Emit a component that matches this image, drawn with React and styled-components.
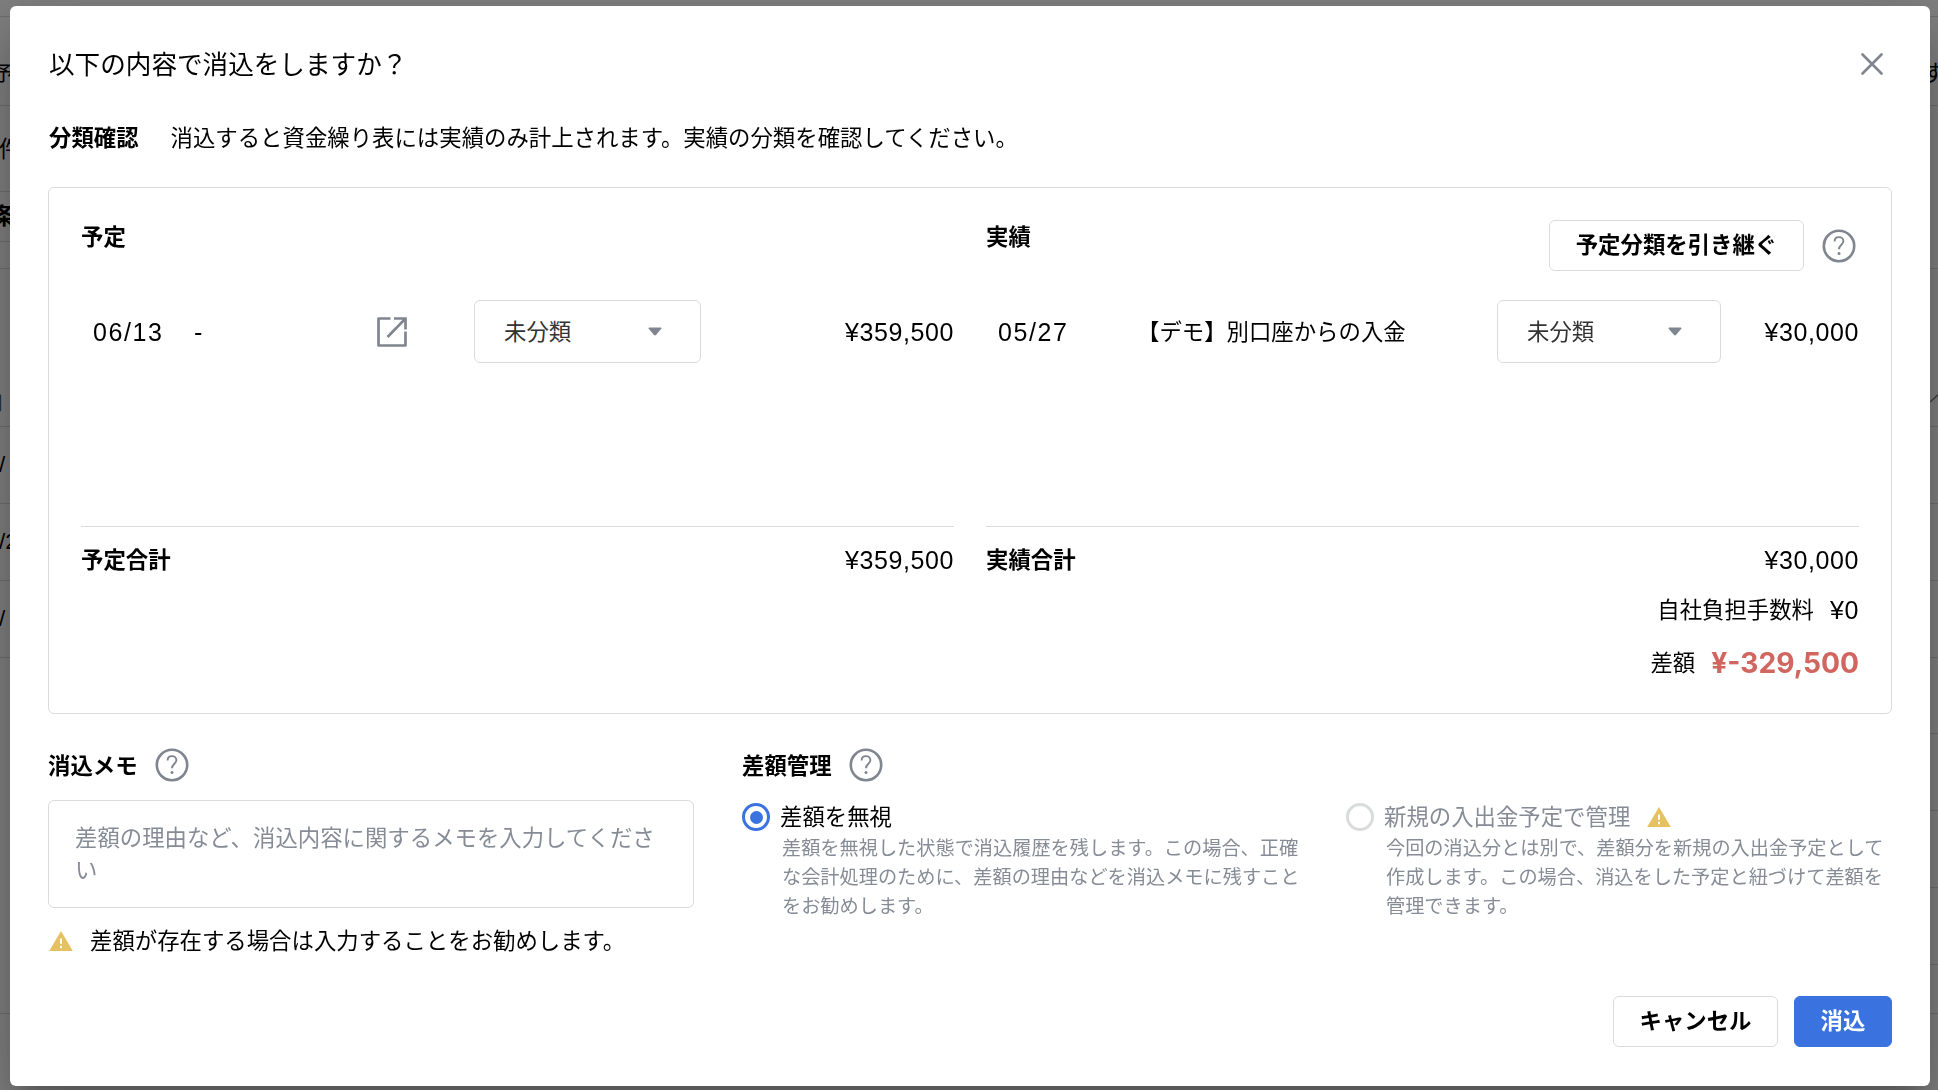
import React, { useState } from "react";
import styled, { createGlobalStyle } from "styled-components";

const GlobalStyle = createGlobalStyle`
  * {
    box-sizing: border-box;
  }
  html,
  body {
    margin: 0;
    height: 100%;
    overflow: hidden;
  }
  body {
    font-family: "Noto Sans CJK JP", sans-serif;
    font-size: 22.4px;
    line-height: 32px;
    color: #000;
    background-color: #fff;
  }
  button,
  textarea {
    font-family: inherit;
    font-size: inherit;
    line-height: inherit;
  }
`;

/* page behind the dialog */

const Page = styled.div`
  display: flex;
  justify-content: space-between;
  width: 1938px;
  height: 1090px;
  overflow: hidden;
`;

const PageColumn = styled.div`
  width: 50%;
  overflow: hidden;
`;

const PageRow = styled.div`
  display: flex;
  align-items: center;
  justify-content: ${props => (props.$right ? "flex-end" : "flex-start")};
  height: ${props => props.$height}px;
  border-bottom: 1px solid ${props => (props.$last ? "transparent" : "#d9dcdc")};
`;

const PageText = styled.span`
  margin-left: ${props => props.$left || 0}px;
  margin-right: ${props => props.$right || 0}px;
  padding-top: ${props => props.$top || 0}px;
  padding-bottom: ${props => props.$bottom || 0}px;
  white-space: nowrap;
  font-family: ${props =>
    props.$latin ? '"Liberation Sans", sans-serif' : "inherit"};
  font-weight: ${props => (props.$bold ? "bold" : "normal")};
  font-size: ${props => props.$size || 22.4}px;
  color: ${props => props.$color || "#000"};
`;

/* dialog */

const Backdrop = styled.div`
  position: fixed;
  inset: 0;
  padding: 6px 8px 4px 10px;
  background-color: rgba(0, 0, 0, 0.5);
`;

const Dialog = styled.section`
  display: flex;
  flex-direction: column;
  width: 1920px;
  height: 1080px;
  padding: 0 38px;
  border-radius: 6px;
  background-color: #fff;
  box-shadow: 0 18px 24px -11px rgba(0, 0, 0, 0.2),
    0 38px 61px 5px rgba(0, 0, 0, 0.14), 0 14px 74px 13px rgba(0, 0, 0, 0.12);
`;

const DialogHeader = styled.header`
  display: flex;
  align-items: center;
  justify-content: space-between;
  height: 116px;
  padding-right: 8px;
`;

const Title = styled.h1`
  margin: 0;
  padding: 0 0 2px 1px;
  font-size: 25.6px;
  font-weight: normal;
`;

const IconButton = styled.button`
  display: flex;
  padding: 0;
  border: none;
  background: none;
  color: #808690;
`;

const Lead = styled.div`
  display: flex;
  align-items: center;
  gap: 32px;
  height: 30px;
  padding-left: 1px;
`;

const Text = styled.span`
  padding-bottom: 3px;
`;

const Bold = styled(Text)`
  font-weight: bold;
`;

const Panel = styled.section`
  display: grid;
  grid-template-columns: 1fr 1fr;
  column-gap: 32px;
  height: 527px;
  margin-top: 35px;
  padding: 32px;
  border: 1px solid #d9dcdc;
  border-radius: 6px;
`;

const Side = styled.div`
  display: flex;
  flex-direction: column;
`;

const SideHeader = styled.div`
  display: flex;
  align-items: flex-start;
  justify-content: space-between;
  height: 80px;
  line-height: 30px;
`;

const Tools = styled.div`
  display: flex;
  align-items: center;
  gap: 18px;
  padding-right: 3px;
`;

const Entries = styled.div`
  height: 227px;
  border-bottom: 1px solid #d9dcdc;
`;

const Entry = styled.div`
  display: grid;
  grid-template-columns: ${props => props.$columns};
  align-items: center;
  height: 63px;
  padding-left: 12px;
`;

const Num = styled.span`
  font-family: "Liberation Sans", sans-serif;
  font-size: 25px;
  letter-spacing: 0.6px;
  text-align: right;
`;

const DateText = styled(Num)`
  letter-spacing: 1.6px;
  text-align: left;
`;

const Select = styled.button`
  display: flex;
  align-items: center;
  justify-content: space-between;
  width: 100%;
  height: 63px;
  padding: 0 38px 0 29px;
  border: 1px solid #d9dcdc;
  border-radius: 6px;
  background-color: #fff;
  color: #333;
`;

const Caret = styled.svg`
  width: 14px;
  height: 9px;
  fill: #808690;
`;

const Button = styled.button`
  width: ${props => props.$width}px;
  height: 51px;
  padding: 0 0 5px;
  border: 1px solid ${props => (props.$primary ? "#3a73e0" : "#d9dcdc")};
  border-radius: 6px;
  font-weight: bold;
  color: ${props => (props.$primary ? "#fff" : "#000")};
  background-color: ${props => (props.$primary ? "#3a73e0" : "#fff")};
`;

const TotalRow = styled.div`
  display: flex;
  align-items: center;
  justify-content: ${props => (props.$end ? "flex-end" : "space-between")};
  gap: 16px;
  height: ${props => props.$height}px;
`;

const Difference = styled.span`
  padding-top: 2px;
  font-family: Inter, sans-serif;
  font-size: 28.2px;
  font-weight: 700;
  color: #d1655f;
`;

const Bottom = styled.div`
  display: grid;
  grid-template-columns: 646px 1fr;
  column-gap: 48px;
  height: 282px;
  padding-top: 34px;
`;

const Label = styled.div`
  display: flex;
  align-items: center;
  gap: 17px;
  height: 34px;
`;

const Memo = styled.textarea`
  display: block;
  width: 646px;
  height: 108px;
  margin-top: 18px;
  padding: 19px 32px 19px 26px;
  border: 1px solid #d9dcdc;
  border-radius: 6px;
  outline: none;
  resize: none;
  overflow: hidden;
  &::placeholder {
    color: #868c96;
    opacity: 1;
  }
`;

const Notice = styled.div`
  display: flex;
  align-items: center;
  gap: 17px;
  margin-top: 15px;
  padding-left: 1px;
`;

const Options = styled.div`
  display: grid;
  grid-template-columns: 604px 1fr;
  margin-top: 18px;
`;

const Option = styled.label`
  display: grid;
  grid-template-columns: 28px 1fr;
  grid-template-rows: 33px;
  column-gap: 10px;
  align-items: center;
  color: ${props => (props.$disabled ? "#868c96" : "#000")};
`;

const Radio = styled.span`
  display: flex;
  align-items: center;
  justify-content: center;
  width: 28px;
  height: 28px;
  margin-top: 1px;
  border: 3px solid ${props => (props.$checked ? "#3a73e0" : "#d9dcdc")};
  border-radius: 50%;
  &::after {
    content: "";
    width: 13px;
    height: 13px;
    border-radius: 50%;
    background-color: ${props => (props.$checked ? "#3a73e0" : "#fff")};
  }
`;

const OptionTitle = styled.span`
  display: flex;
  align-items: center;
  gap: 17px;
`;

const OptionText = styled.p`
  grid-column: 2;
  width: ${props => props.$width}px;
  margin: 0 0 0 2px;
  font-size: 19.2px;
  line-height: 29px;
  color: #868c96;
`;

const Footer = styled.footer`
  display: flex;
  justify-content: flex-end;
  gap: 16px;
`;

const CloseIcon = () => (
  <svg width="24" height="24" viewBox="0 0 24 24" fill="none" stroke="currentColor" strokeWidth="2.6" strokeLinecap="round">
    <path d="M2.5 2.5l19 19M21.5 2.5l-19 19" />
  </svg>
);

const HelpIcon = () => (
  <svg width="34" height="34" viewBox="0 0 34 34" fill="none" stroke="#808690" strokeWidth="2.6">
    <circle cx="17" cy="17" r="15.2" />
    <path d="M12.6 12.4c0-2.6 1.9-4.3 4.4-4.3s4.4 1.7 4.4 4.1c0 3.4-4.4 3.8-4.4 8" strokeWidth="1.9" />
    <circle cx="17" cy="24.6" r="1.5" fill="#808690" stroke="none" />
  </svg>
);

const ExternalIcon = () => (
  <svg width="30" height="30" viewBox="0 0 30 30" fill="none" stroke="#808690" strokeWidth="2.7">
    <path d="M13.5 1.5H1.5V28.5H28.5V14.5" strokeLinejoin="round" />
    <path d="M17 1.5H28.5V12.5M28 2L10.5 20" />
  </svg>
);

const WarningIcon = () => (
  <svg width="24" height="20" viewBox="0 0 24 20">
    <path d="M12 0L23.8 20H0.2Z" fill="#e5c162" />
    <path d="M12 7.6v5.2M12 14.8v2.4" stroke="#fff" strokeWidth="2" />
  </svg>
);

const CategorySelect = () => (
  <Select>
    <Text>未分類</Text>
    <Caret viewBox="0 0 14 9">
      <path d="M1.4 0.4h11.2c.9 0 1.2.8.7 1.4L8 8c-.6.6-1.4.6-2 0L.7 1.8C.2 1.2.5.4 1.4.4z" />
    </Caret>
  </Select>
);

const leftRows = [
  { height: 17 },
  { height: 89, text: "予", left: -7, size: 20.8, top: 22 },
  { height: 86, text: "件", left: -1, bottom: 4 },
  { height: 50, text: "条", left: -7, bottom: 6, bold: true },
  { height: 27 },
  { height: 158, text: "日", left: -15, top: 108, size: 19.2, color: "#555a66" },
  { height: 77, text: "/", left: -1, latin: true },
  { height: 77, text: "/2", left: -1, latin: true },
  { height: 77, text: "/", left: -1, latin: true },
  { height: 356 },
  { height: 76, last: true }
];

const rightRows = [
  { height: 17 },
  { height: 89, text: "す", right: -7, top: 20 },
  { height: 163 },
  { height: 158, pencil: true },
  { height: 77 },
  { height: 77 },
  { height: 77 },
  { height: 76 },
  { height: 77 },
  { height: 77 },
  { height: 77 },
  { height: 49 },
  { height: 76, last: true }
];

const PencilLine = styled.svg`
  width: 8px;
  height: 12px;
  margin-top: 100px;
`;

const displayRows = (rows, right) =>
  rows.map((row, index) => (
    <PageRow key={index} $height={row.height} $last={row.last} $right={right}>
      {row.text && (
        <PageText
          $left={row.left}
          $right={row.right}
          $top={row.top}
          $bottom={row.bottom}
          $size={row.size}
          $bold={row.bold}
          $latin={row.latin}
          $color={row.color}
        >
          {row.text}
        </PageText>
      )}
      {row.pencil && (
        <PencilLine viewBox="0 0 8 12">
          <path d="M0 10L9 2" stroke="#808690" strokeWidth="1.6" />
        </PencilLine>
      )}
    </PageRow>
  ));

const App = () => {
  const [mode, setMode] = useState("ignore");

  return (
    <>
      <GlobalStyle />
      <Page>
        <PageColumn>{displayRows(leftRows, false)}</PageColumn>
        <PageColumn>{displayRows(rightRows, true)}</PageColumn>
      </Page>
      <Backdrop>
        <Dialog>
          <DialogHeader>
            <Title>以下の内容で消込をしますか？</Title>
            <IconButton>
              <CloseIcon />
            </IconButton>
          </DialogHeader>
          <Lead>
            <Bold>分類確認</Bold>
            <Text>
              消込すると資金繰り表には実績のみ計上されます。実績の分類を確認してください。
            </Text>
          </Lead>
          <Panel>
            <Side>
              <SideHeader>
                <Bold>予定</Bold>
              </SideHeader>
              <Entries>
                <Entry $columns="101px 183px 97px 227px 1fr">
                  <DateText>06/13</DateText>
                  <DateText>-</DateText>
                  <ExternalIcon />
                  <CategorySelect />
                  <Num>¥359,500</Num>
                </Entry>
              </Entries>
              <TotalRow $height={65}>
                <Bold>予定合計</Bold>
                <Num>¥359,500</Num>
              </TotalRow>
            </Side>
            <Side>
              <SideHeader>
                <Bold>実績</Bold>
                <Tools>
                  <Button $width={255}>予定分類を引き継ぐ</Button>
                  <HelpIcon />
                </Tools>
              </SideHeader>
              <Entries>
                <Entry $columns="139px 360px 224px 1fr">
                  <DateText>05/27</DateText>
                  <Text>【デモ】別口座からの入金</Text>
                  <CategorySelect />
                  <Num>¥30,000</Num>
                </Entry>
              </Entries>
              <TotalRow $height={65}>
                <Bold>実績合計</Bold>
                <Num>¥30,000</Num>
              </TotalRow>
              <TotalRow $height={35} $end>
                <Text>自社負担手数料</Text>
                <Num>¥0</Num>
              </TotalRow>
              <TotalRow $height={70} $end>
                <Text>差額</Text>
                <Difference>¥-329,500</Difference>
              </TotalRow>
            </Side>
          </Panel>
          <Bottom>
            <div>
              <Label>
                <Bold>消込メモ</Bold>
                <HelpIcon />
              </Label>
              <Memo placeholder="差額の理由など、消込内容に関するメモを入力してください" />
              <Notice>
                <WarningIcon />
                <Text>差額が存在する場合は入力することをお勧めします。</Text>
              </Notice>
            </div>
            <div>
              <Label>
                <Bold>差額管理</Bold>
                <HelpIcon />
              </Label>
              <Options>
                <Option onClick={() => setMode("ignore")}>
                  <Radio $checked={mode === "ignore"} />
                  <OptionTitle>
                    <Text>差額を無視</Text>
                  </OptionTitle>
                  <OptionText $width={522}>
                    差額を無視した状態で消込履歴を残します。この場合、正確な会計処理のために、差額の理由などを消込メモに残すことをお勧めします。
                  </OptionText>
                </Option>
                <Option $disabled>
                  <Radio />
                  <OptionTitle>
                    <Text>新規の入出金予定で管理</Text>
                    <WarningIcon />
                  </OptionTitle>
                  <OptionText $width={504}>
                    今回の消込分とは別で、差額分を新規の入出金予定として作成します。この場合、消込をした予定と紐づけて差額を管理できます。
                  </OptionText>
                </Option>
              </Options>
            </div>
          </Bottom>
          <Footer>
            <Button $width={165}>キャンセル</Button>
            <Button $width={98} $primary>
              消込
            </Button>
          </Footer>
        </Dialog>
      </Backdrop>
    </>
  );
};

export default App;
